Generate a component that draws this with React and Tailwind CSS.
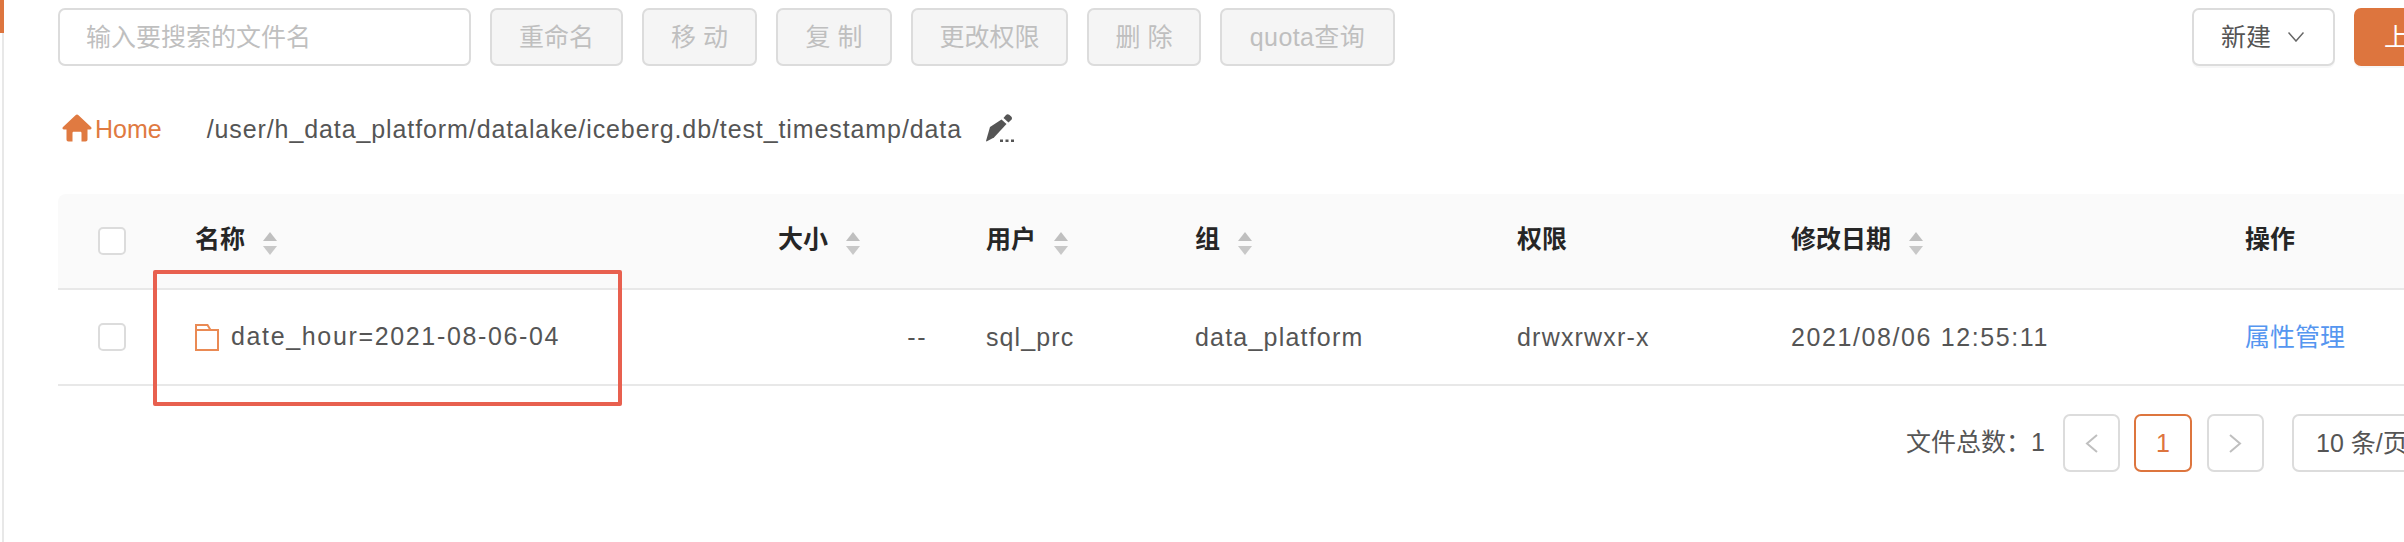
const TOOL_BUTTONS = [
  { label: '重命名', width: 'w-[133px]' },
  { label: '移 动', width: 'w-[115px]' },
  { label: '复 制', width: 'w-[116px]' },
  { label: '更改权限', width: 'w-[157px]' },
  { label: '删 除', width: 'w-[114px]' },
  { label: 'quota查询', width: 'w-[175px] tracking-[0.4px]' },
]

function SortCaret() {
  return (
    <svg width="14" height="24" viewBox="0 0 14 24" className="ml-[18px] shrink-0 translate-y-[3px]">
      <path d="M7 0 L14 9 L0 9 Z" fill="#bfbfbf" />
      <path d="M0 14 L14 14 L7 23 Z" fill="#c8c8c8" />
    </svg>
  )
}

function HeadCell({ children, sortable }) {
  return (
    <th className="p-0 text-left font-semibold text-[#262626]">
      <div className="flex items-center">
        <span className="-translate-y-[2px]">{children}</span>
        {sortable && <SortCaret />}
      </div>
    </th>
  )
}

function Checkbox() {
  return <div className="ml-[40px] h-[28px] w-[28px] rounded-[5px] border-2 border-[#dcdcdc] bg-white" />
}

function HomeIcon() {
  return (
    <svg width="30" height="28" viewBox="0 0 30 28" className="shrink-0">
      <path
        d="M15 0.5 C15.6 0.5 16 0.8 16.5 1.2 L29 13 C30 14 29.5 15.5 28 15.5 L25.5 15.5 L25.5 25.5 C25.5 26.8 24.8 27.5 23.5 27.5 L19.5 27.5 L19.5 19 C19.5 18.2 19 17.8 18.2 17.8 L11.8 17.8 C11 17.8 10.5 18.2 10.5 19 L10.5 27.5 L6.5 27.5 C5.2 27.5 4.5 26.8 4.5 25.5 L4.5 15.5 L2 15.5 C0.5 15.5 0 14 1 13 L13.5 1.2 C14 0.8 14.4 0.5 15 0.5 Z"
        fill="#e07a41"
      />
    </svg>
  )
}

function PencilIcon() {
  return (
    <svg width="28" height="28" viewBox="0 0 28 28" className="shrink-0">
      <path d="M4 13 L15.5 5.5 L20.5 10 L8 23.5 L0.5 27.5 L0 27 Z" fill="#555" />
      <path d="M17.5 4 L20 1 C21 0 22.2 0 23.2 0.8 L25.2 2.6 C26.2 3.6 26.2 4.8 25.4 5.8 L22.5 8.6 Z" fill="#555" />
      <rect x="14" y="25.5" width="3" height="2.5" fill="#555" />
      <rect x="19.5" y="25.5" width="3" height="2.5" fill="#555" />
      <rect x="25" y="25.5" width="3" height="2.5" fill="#555" />
    </svg>
  )
}

function FolderIcon() {
  return (
    <svg width="24" height="27" viewBox="0 0 24 27" fill="none" className="shrink-0">
      <path d="M1 1 H12.5 L15.5 6 H23 V26 H1 Z" stroke="#ea8a54" strokeWidth="2" />
      <path d="M1 6 H15.5" stroke="#ea8a54" strokeWidth="2" />
    </svg>
  )
}

function PageArrow({ d }) {
  return (
    <svg width="13" height="19" viewBox="0 0 13 19" fill="none">
      <path d={d} stroke="#bfbfbf" strokeWidth="2" />
    </svg>
  )
}

export default function App() {
  return (
    <div className="relative flex h-[542px] w-[2404px] overflow-hidden bg-white font-['Liberation_Sans','Noto_Sans_CJK_SC',sans-serif] text-[25px] leading-none text-[#555]">
      {/* left edge of the sidebar */}
      <div className="flex w-[4px] shrink-0 flex-col">
        <div className="h-[33px] bg-[#dd753e]" />
        <div className="ml-[2px] flex-1 bg-[#e8e8e8]" />
      </div>

      <main className="w-[2480px] shrink-0 pl-[54px] pt-[8px]">
        {/* toolbar */}
        <div className="flex h-[58px] items-stretch">
          <div className="flex w-[413px] items-center rounded-[7px] border-2 border-[#dcdcdc] pl-[26px] text-[#bfbfbf]">
            输入要搜索的文件名
          </div>
          <div className="ml-[19px] flex gap-[19px]">
            {TOOL_BUTTONS.map((b) => (
              <div
                key={b.label}
                className={`flex items-center justify-center rounded-[7px] border-2 border-[#dcdcdc] bg-[#f5f5f5] text-[#bfbfbf] ${b.width}`}
              >
                {b.label}
              </div>
            ))}
          </div>
          <div className="ml-auto flex gap-[19px]">
            <div className="flex w-[143px] items-center rounded-[7px] border-2 border-[#dcdcdc] bg-white pl-[27px] shadow-[0_2px_0_rgba(0,0,0,0.03)]">
              新建
              <svg width="16" height="10" viewBox="0 0 16 10" fill="none" className="ml-[17px]">
                <path d="M0.5 0.5 L8 9 L15.5 0.5" stroke="#666" strokeWidth="1.5" />
              </svg>
            </div>
            <div className="flex w-[130px] items-center rounded-[7px] bg-[#dd753e] pl-[30px] text-white shadow-[0_2px_0_rgba(0,0,0,0.03)]">
              上传
            </div>
          </div>
        </div>

        {/* breadcrumb */}
        <div className="mt-[42px] flex h-[40px] items-center">
          <div className="ml-[4px] flex items-center text-[#e07a41]">
            <HomeIcon />
            <span className="ml-[3px] translate-y-[1px]">Home</span>
          </div>
          <span className="ml-[45px] translate-y-[1px] tracking-[0.9px]">
            /user/h_data_platform/datalake/iceberg.db/test_timestamp/data
          </span>
          <span className="ml-[24px]">
            <PencilIcon />
          </span>
        </div>

        {/* file table */}
        <table className="mt-[46px] w-[2426px] table-fixed border-collapse">
          <colgroup>
            <col className="w-[137px]" />
            <col className="w-[583px]" />
            <col className="w-[208px]" />
            <col className="w-[209px]" />
            <col className="w-[322px]" />
            <col className="w-[274px]" />
            <col className="w-[454px]" />
            <col className="w-[239px]" />
          </colgroup>
          <thead>
            <tr className="h-[95px] border-b-2 border-[#e8e8e8] bg-[#fafafa]">
              <th className="rounded-tl-[8px] p-0">
                <Checkbox />
              </th>
              <HeadCell sortable>名称</HeadCell>
              <HeadCell sortable>大小</HeadCell>
              <HeadCell sortable>用户</HeadCell>
              <HeadCell sortable>组</HeadCell>
              <HeadCell>权限</HeadCell>
              <HeadCell sortable>修改日期</HeadCell>
              <HeadCell>操作</HeadCell>
            </tr>
          </thead>
          <tbody>
            <tr className="h-[96px] border-b-2 border-[#e8e8e8]">
              <td className="p-0">
                <Checkbox />
              </td>
              <td className="p-0">
                <div className="flex items-center gap-[12px]">
                  <FolderIcon />
                  <span className="-translate-y-[1px] tracking-[1.65px]">date_hour=2021-08-06-04</span>
                </div>
              </td>
              <td className="p-0 pr-[59px] text-right tracking-[1.5px]">--</td>
              <td className="p-0 tracking-[1.1px]">sql_prc</td>
              <td className="p-0 tracking-[1.2px]">data_platform</td>
              <td className="p-0 tracking-[1.2px]">drwxrwxr-x</td>
              <td className="p-0 tracking-[1.6px]">2021/08/06 12:55:11</td>
              <td className="p-0 text-[#5596f0]">属性管理</td>
            </tr>
          </tbody>
        </table>

        {/* pagination */}
        <div className="mt-[28px] flex h-[58px] items-center justify-end pr-[2px]">
          <span className="-translate-y-[1px]">文件总数：1</span>
          <div className="ml-[18px] flex h-full w-[57px] items-center justify-center rounded-[7px] border-2 border-[#dcdcdc]">
            <PageArrow d="M12 1 L2 9.5 L12 18" />
          </div>
          <div className="ml-[14px] flex h-full w-[58px] items-center justify-center rounded-[7px] border-2 border-[#dd753e] text-[#dd753e]">
            1
          </div>
          <div className="ml-[15px] flex h-full w-[57px] items-center justify-center rounded-[7px] border-2 border-[#dcdcdc]">
            <PageArrow d="M1 1 L11 9.5 L1 18" />
          </div>
          <div className="ml-[28px] flex h-full w-[190px] items-center rounded-[7px] border-2 border-[#dcdcdc] pl-[22px]">
            10 条/页
          </div>
        </div>
      </main>

      {/* red annotation box drawn over the screenshot */}
      <div className="absolute left-[153px] top-[270px] h-[136px] w-[469px] rounded-[2px] border-[4px] border-[#e8604f]" />
    </div>
  )
}
